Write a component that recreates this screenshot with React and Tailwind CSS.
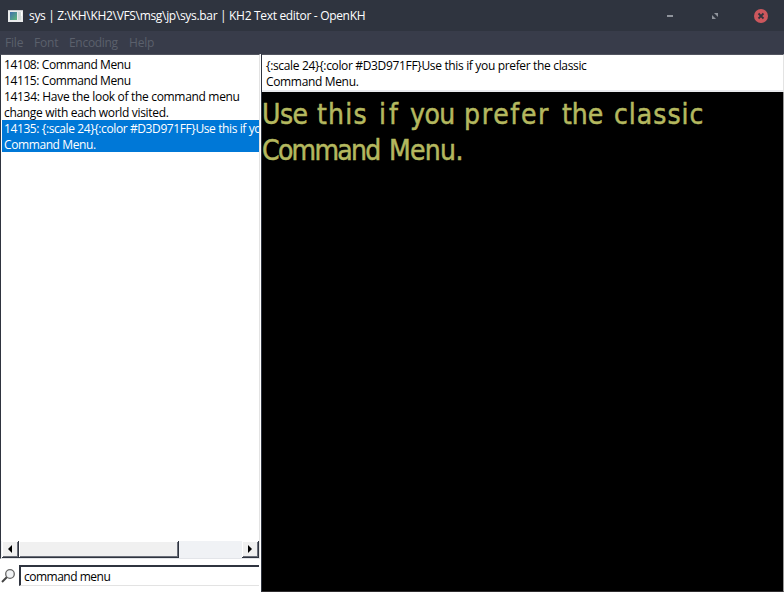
const UI = "font-['Open_Sans','Noto_Sans',sans-serif]";

function AppIcon() {
  return (
    <svg width="16" height="14" viewBox="0 0 16 14" shapeRendering="crispEdges">
      <defs>
        <linearGradient id="pane" x1="0" y1="0" x2="1" y2="1">
          <stop offset="0" stopColor="#3f6fae" />
          <stop offset="1" stopColor="#5fb878" />
        </linearGradient>
      </defs>
      <rect x="0" y="1" width="15" height="12" fill="#e9ebec" />
      <rect x="0" y="1" width="15" height="1" fill="#c9cbce" />
      <rect x="2" y="3" width="7" height="8" fill="url(#pane)" />
      <rect x="10" y="3" width="3" height="8" fill="#cfd9d8" />
      <rect x="13" y="3" width="1" height="4" fill="#fff" />
    </svg>
  );
}

function TitleBar() {
  return (
    <div className="flex h-[31px] shrink-0 items-center bg-[#2f343f] pl-2 pr-[16px]">
      <AppIcon />
      <span className="ml-[5px] w-[400px] whitespace-pre text-[12px] leading-4 tracking-[-0.32px] text-white">
        sys | Z:\KH\KH2\VFS\msg\jp\sys.bar | KH2 Text editor - OpenKH
      </span>
      <div className="ml-auto flex items-center">
        <div className="mr-[39px] h-[2px] w-[6px] bg-[#90949c]" />
        <svg className="mr-[36px]" width="6" height="6" viewBox="0 0 6 6" fill="#90949c">
          <path d="M2 0H6V4ZM0 2V6H4Z" />
        </svg>
        <svg width="14" height="14" viewBox="0 0 14 14">
          <circle cx="7" cy="7" r="7" fill="#cc575d" />
          <path d="M4.5 4.5l5 5M9.5 4.5l-5 5" stroke="#2f343f" strokeWidth="1.8" />
        </svg>
      </div>
    </div>
  );
}

function MenuBar() {
  return (
    <div className="flex h-[23px] shrink-0 items-center bg-[#383c4a] pl-[5px] text-[12px] leading-4 text-[#5b606c]">
      <span className="w-[29px] tracking-[-0.2px]">File</span>
      <span className="w-[35px] tracking-[-0.2px]">Font</span>
      <span className="w-[60px] tracking-[-0.3px]">Encoding</span>
      <span className="tracking-[-0.2px]">Help</span>
    </div>
  );
}

function ScrollButton({ d }) {
  return (
    <div className="flex h-[17px] w-[17px] shrink-0 items-center justify-center border-b border-r border-[#2f343f] bg-[#f0f0f0] shadow-[inset_1px_1px_#fff,inset_-1px_-1px_#6a6e79]">
      <svg width="4" height="8" viewBox="0 0 4 8">
        <path d={d} fill="#000" />
      </svg>
    </div>
  );
}

function MessageList() {
  return (
    <div className="flex h-[505px] flex-col border-b border-l border-r border-t border-b-[#e3e5e9] border-l-[#2f343f] border-r-[#e3e3e3] border-t-[#51545f] bg-white">
      <div className="flex flex-1 flex-col overflow-hidden pl-px pt-[2px] text-[12px] leading-4 text-black">
        <div className="whitespace-pre pl-[2px] tracking-[-0.4px]">14108: Command Menu</div>
        <div className="whitespace-pre pl-[2px] tracking-[-0.4px]">14115: Command Menu</div>
        <div className="whitespace-pre pl-[2px] tracking-[-0.32px]">
          14134: Have the look of the command menu{"\n"}change with each world visited.
        </div>
        <div className="-mt-px h-8 overflow-hidden whitespace-pre bg-[#0078d7] pl-[2px] pt-px tracking-[-0.4px] text-white">
          {"14135: {:scale 24}{:color #D3D971FF}Use this if you prefer the classic\nCommand Menu."}
        </div>
      </div>
      <div className="flex h-[17px] shrink-0 bg-[#f0f2f5] pl-px">
        <ScrollButton d="M4 0V8L0 4Z" />
        <div className="h-[17px] w-[160px] border-b border-r border-[#2f343f] bg-[#f0f0f0] shadow-[inset_1px_1px_#fff,inset_-1px_-1px_#6a6e79]" />
        <div className="ml-auto">
          <ScrollButton d="M0 0V8L4 4Z" />
        </div>
      </div>
    </div>
  );
}

function SearchBar() {
  return (
    <div className="flex h-[33px] items-start bg-white pr-px pt-[6px]">
      <svg className="mt-[4px] shrink-0" width="19" height="15" viewBox="0 0 19 15" fill="none">
        <path d="M2 13L7 8" stroke="#444" strokeWidth="2" />
        <circle cx="10" cy="5" r="4.3" fill="#f1f3f5" stroke="#666" strokeWidth="1.3" />
      </svg>
      <div className="h-[21px] flex-1 border-b border-l-2 border-t-2 border-b-[#e3e3e3] border-l-[#2f343f] border-t-[#2f343f] pl-[3px] pt-[2px] text-[12px] leading-4 tracking-[-0.5px] text-black">
        command menu
      </div>
    </div>
  );
}

function Preview() {
  return (
    <div className="flex-1 overflow-hidden border-b border-r border-b-[#302d30] border-r-[#999] bg-black pt-[5px] font-['DejaVu_Sans_Condensed','DejaVu_Sans',sans-serif] text-[28px] leading-9 text-[#b4b85f] [-webkit-text-stroke:0.5px_#b4b85f] [font-stretch:condensed]">
      <div className="flex whitespace-pre">
        <span className="w-[55px] tracking-[-0.5px]">Use</span>
        <span className="w-[62px] tracking-[1.2px]">this</span>
        <span className="w-[31px] tracking-[3px]">if</span>
        <span className="w-[54px] tracking-[-0.5px]">you</span>
        <span className="w-[98px] tracking-[1.7px]">prefer</span>
        <span className="w-[52px] tracking-[0px]">the</span>
        <span className="tracking-[1px]">classic</span>
      </div>
      <div className="flex whitespace-pre">
        <span className="w-[127px] tracking-[-1.7px]">Command</span>
        <span className="tracking-[-0.7px]">Menu.</span>
      </div>
    </div>
  );
}

export default function App() {
  return (
    <div className={`flex h-[592px] w-[784px] flex-col overflow-hidden bg-white ${UI}`}>
      <TitleBar />
      <MenuBar />
      <div className="flex min-h-0 flex-1">
        <div className="flex w-[260px] shrink-0 flex-col">
          <MessageList />
          <SearchBar />
        </div>
        <div className="w-px shrink-0 bg-white" />
        <div className="flex min-w-0 flex-1 flex-col border-l border-[#2f343f]">
          <div className="h-[38px] shrink-0 whitespace-pre border-b-2 border-r border-t border-b-[#e8eaed] border-r-[#e3e3e3] border-t-[#51545f] bg-white pl-1 pt-[3px] text-[12px] leading-4 tracking-[-0.34px] text-black">
            {"{:scale 24}{:color #D3D971FF}Use this if you prefer the classic\nCommand Menu."}
          </div>
          <Preview />
        </div>
      </div>
    </div>
  );
}
